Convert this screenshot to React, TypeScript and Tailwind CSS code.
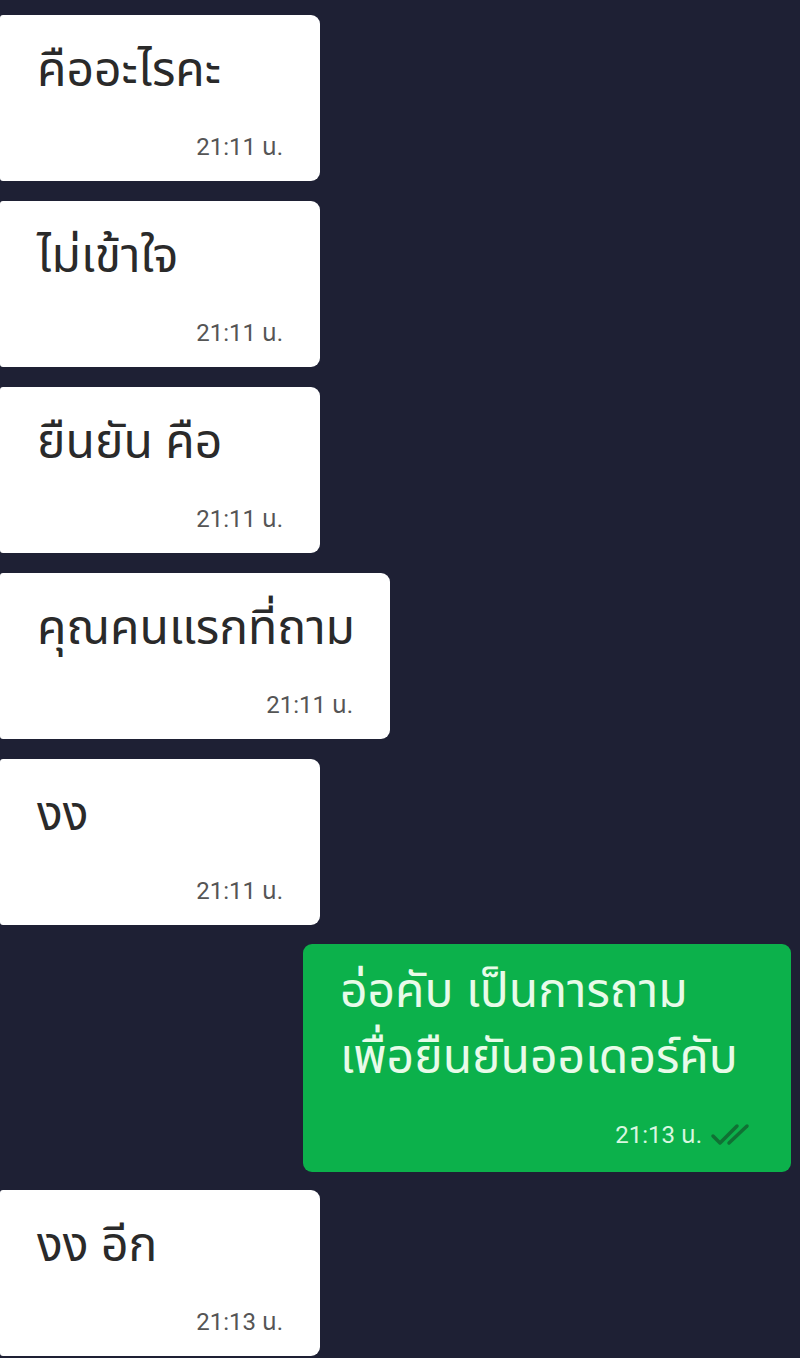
import { FC } from "react";

interface Msg {
  text: string;
  time: string;
  wide?: boolean;
}

const incoming: Msg[] = [
  { text: "คืออะไรคะ", time: "21:11 น." },
  { text: "ไม่เข้าใจ", time: "21:11 น." },
  { text: "ยืนยัน คือ", time: "21:11 น." },
  { text: "คุณคนแรกที่ถาม", time: "21:11 น.", wide: true },
  { text: "งง", time: "21:11 น." },
];

const font = { fontFamily: '"Noto Sans Thai", "Noto Sans", "DejaVu Sans", sans-serif' };
const timeFont = { fontFamily: 'Roboto, "Noto Sans Thai", "Noto Sans", sans-serif' };

const DoubleCheck: FC = () => (
  <svg width="44" height="26" viewBox="0 0 44 26" fill="none" className="ml-[8px]">
    <path d="M3 14 L10 21 L27 4" stroke="#107134" strokeWidth="3.5" strokeLinecap="round" strokeLinejoin="round" />
    <path d="M19 21 L37 4" stroke="#107134" strokeWidth="3.5" strokeLinecap="round" />
  </svg>
);

const Bubble: FC<{ msg: Msg }> = ({ msg }) => (
  <div
    className={`h-[166px] bg-white rounded-l-[3px] rounded-r-[9px] px-[37px] pt-[29px] ${
      msg.wide ? "w-[390px]" : "w-[320px]"
    }`}
  >
    <div className="text-[48px] leading-[56px] text-[#2a2a2a] whitespace-nowrap">{msg.text}</div>
    <div className="mt-[32px] text-right text-[24px] leading-[30px] text-[#555555]" style={timeFont}>
      {msg.time}
    </div>
  </div>
);

export default function App() {
  return (
    <div className="w-[800px] h-[1358px] bg-[#1e2034] overflow-hidden pt-[15px]" style={font}>
      <div className="flex flex-col gap-[20px]">
        {incoming.map((m, i) => (
          <Bubble key={i} msg={m} />
        ))}
        <div className="flex justify-end pr-[9px] -mt-[1px]">
          <div className="h-[228px] w-[488px] bg-[#0cb14b] rounded-[9px] px-[37px] pt-[16px]">
            <div className="text-[48px] leading-[66px] text-[#e8fbe9] whitespace-nowrap">
              <div>อ่อคับ เป็นการถาม</div>
              <div>เพื่อยืนยันออเดอร์คับ</div>
            </div>
            <div className="mt-[28px] flex items-center justify-end text-[24px] leading-[30px] text-[#d9f7e0]" style={timeFont}>
              <span>21:13 น.</span>
              <DoubleCheck />
            </div>
          </div>
        </div>
        <div className="-mt-[2px]">
          <Bubble msg={{ text: "งง อีก", time: "21:13 น." }} />
        </div>
      </div>
    </div>
  );
}
